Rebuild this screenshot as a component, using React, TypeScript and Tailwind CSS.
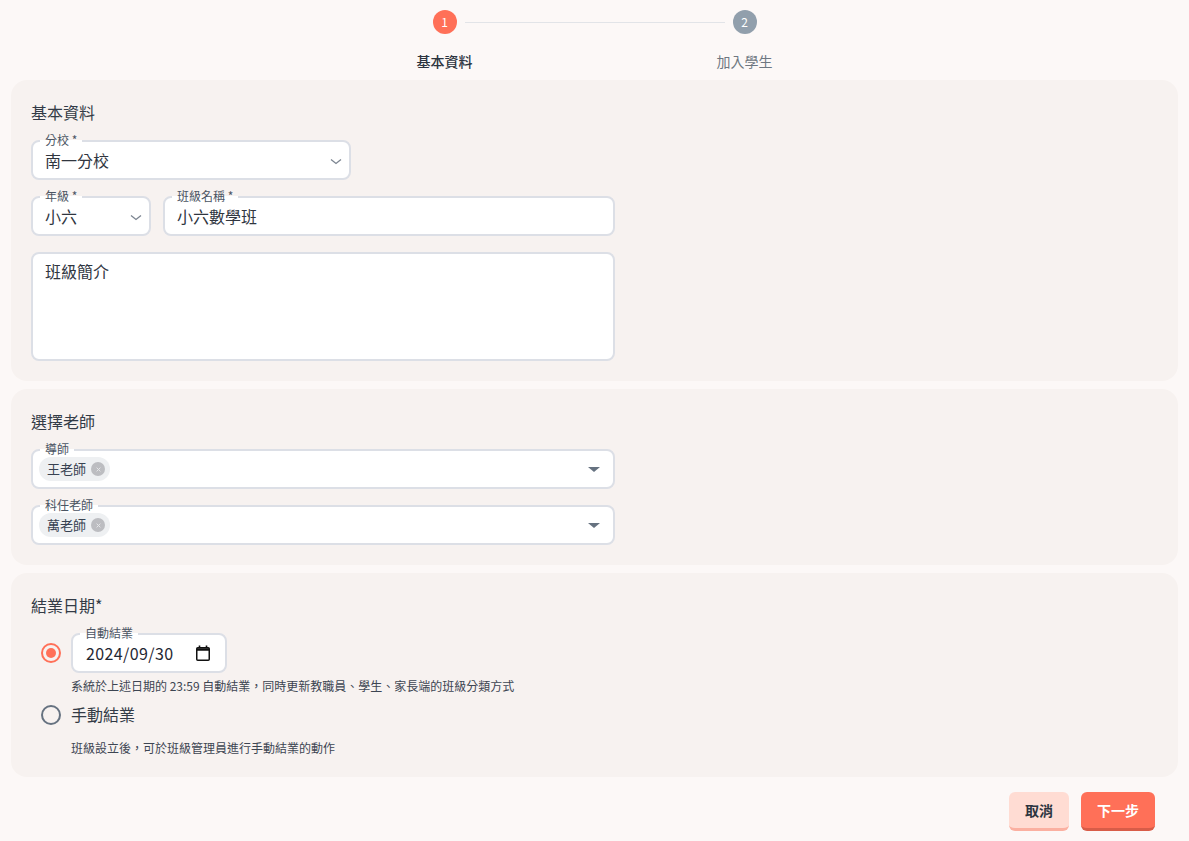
const font = 'font-["Noto_Sans_CJK_TC","Noto_Sans",sans-serif]';

const Field = ({ label, className, children }: { label?: string; className: string; children: React.ReactNode }) => (
  <div className={`relative h-10 flex items-center bg-white border-2 border-[#dcdfe6] rounded-lg ${className}`}>
    {label && (
      <span className="absolute left-[7px] -top-[10px] px-[5px] bg-[linear-gradient(transparent_8px,white_8px)] text-[12px] leading-[16px] text-[#4b5563] h-[14px]">{label}</span>
    )}
    {children}
  </div>
);

const SelectField = ({ label, value, className }: { label: string; value: string; className: string }) => (
  <Field label={label} className={`pl-3 pr-[7px] justify-between ${className}`}>
    <span className="text-[16px] text-[#30363f] -mt-px">{value}</span>
    <svg viewBox="0 0 12 7" className="w-3 h-[7px] mt-[2px]" fill="none" stroke="#7b8490" strokeWidth="1.3">
      <path d="M1 1.5 6 5.5l5-4" />
    </svg>
  </Field>
);

const ChipField = ({ label, chip }: { label: string; chip: string }) => (
  <Field label={label} className="w-[584px] pl-[6px] pr-[13px] justify-between">
    <span className="h-6 pl-2 pr-[5px] flex items-center gap-[5px] rounded-full bg-[#eef0f2] text-[13px] text-[#374151]">
      <span>{chip}</span>
      <span className="w-[14px] h-[14px] rounded-full bg-[#bcbdc1] flex items-center justify-center">
        <svg viewBox="0 0 8 8" className="w-[5px] h-[5px]" stroke="#e4e5e7" strokeWidth="1.6">
          <path d="M1 1l6 6M7 1l-6 6" />
        </svg>
      </span>
    </span>
    <span className="w-0 h-0 border-x-[6px] border-x-transparent border-t-[5px] border-t-[#667280]" />
  </Field>
);

const App = () => {
  return (
    <div className={`min-h-[841px] bg-[#fcf8f7] px-[11px] pt-[10px] ${font}`}>
      <div className="flex justify-center">
        <div className="w-[356px] flex flex-col">
          <div className="flex items-center justify-between px-4">
            <span className="w-6 h-6 rounded-full bg-[#ff7058] text-white text-[12px] flex items-center justify-center">1</span>
            <span className="flex-1 h-px bg-[#e2e4e8] mx-2" />
            <span className="w-6 h-6 rounded-full bg-[#919fac] text-white text-[12px] flex items-center justify-center">2</span>
          </div>
          <div className="flex justify-between mt-[14px] h-[32px] text-[14px] leading-[26px]">
            <span className="font-medium text-[#2c3440]">基本資料</span>
            <span className="text-[#6e7781]">加入學生</span>
          </div>
        </div>
      </div>

      <div className="flex flex-col gap-2">
        <section className="h-[301px] bg-[#f7f2f0] rounded-2xl px-5 pt-5">
          <h2 className="text-[16px] leading-6 font-normal text-[#333b46]">基本資料</h2>
          <SelectField label="分校 *" value="南一分校" className="w-[320px] mt-4" />
          <div className="flex gap-3 mt-4">
            <SelectField label="年級 *" value="小六" className="w-[120px]" />
            <Field label="班級名稱 *" className="w-[452px] px-3">
              <span className="text-[16px] text-[#30363f] -mt-px">小六數學班</span>
            </Field>
          </div>
          <div className="w-[584px] h-[109px] mt-4 bg-white border-2 border-[#dcdfe6] rounded-lg px-3 pt-[5px] text-[16px] leading-6 text-[#30363f]">
            班級簡介
          </div>
        </section>

        <section className="h-[176px] bg-[#f7f2f0] rounded-2xl px-5 pt-5">
          <h2 className="text-[16px] leading-6 font-normal text-[#333b46]">選擇老師</h2>
          <div className="flex flex-col gap-4 mt-4">
            <ChipField label="導師" chip="王老師" />
            <ChipField label="科任老師" chip="萬老師" />
          </div>
        </section>

        <section className="h-[204px] bg-[#f7f2f0] rounded-2xl px-5 pt-5">
          <h2 className="text-[16px] leading-6 font-normal text-[#333b46]">結業日期*</h2>
          <div className="flex items-center gap-[10px] mt-4 pl-[10px]">
            <span className="w-5 h-5 rounded-full border-2 border-[#ff7058] flex items-center justify-center">
              <span className="w-[10px] h-[10px] rounded-full bg-[#ff7058]" />
            </span>
            <Field label="自動結業" className="w-[156px] pl-[13px] pr-[15px] justify-between">
              <span className="text-[16px] tracking-[0.4px] text-[#1f2733]">2024/09/30</span>
              <svg viewBox="0 0 14 16" className="w-[14px] h-4" fill="none" stroke="#111" strokeWidth="1.5">
                <rect x="0.75" y="2.75" width="12.5" height="12.5" rx="1" />
                <path d="M1 4.5h12" strokeWidth="2.5" />
                <path d="M3.5 0.5v2M10.5 0.5v2" strokeWidth="1.6" />
              </svg>
            </Field>
          </div>
          <p className="ml-10 mt-1 text-[12px] leading-[18px] text-[#3d4552]">系統於上述日期的 23:59 自動結業，同時更新教職員、學生、家長端的班級分類方式</p>
          <div className="flex items-center gap-[10px] mt-2 pl-[10px] h-6">
            <span className="w-5 h-5 rounded-full border-2 border-[#667280]" />
            <span className="text-[16px] text-[#333b46] -mt-[2px]">手動結業</span>
          </div>
          <p className="ml-10 mt-3 text-[12px] leading-[18px] text-[#3d4552]">班級設立後，可於班級管理員進行手動結業的動作</p>
        </section>
      </div>

      <div className="flex justify-end gap-3 mt-[15px] pr-[23px]">
        <button className="w-[60px] h-[39px] rounded-md bg-[#ffdcd3] border-b-[3px] border-b-[#fbb0a1] text-[14px] font-bold text-[#2c3440]">取消</button>
        <button className="w-[74px] h-[39px] rounded-md bg-[#ff7058] border-b-[3px] border-b-[#d85c48] text-[14px] font-bold text-white">下一步</button>
      </div>
    </div>
  );
};

export default App;
